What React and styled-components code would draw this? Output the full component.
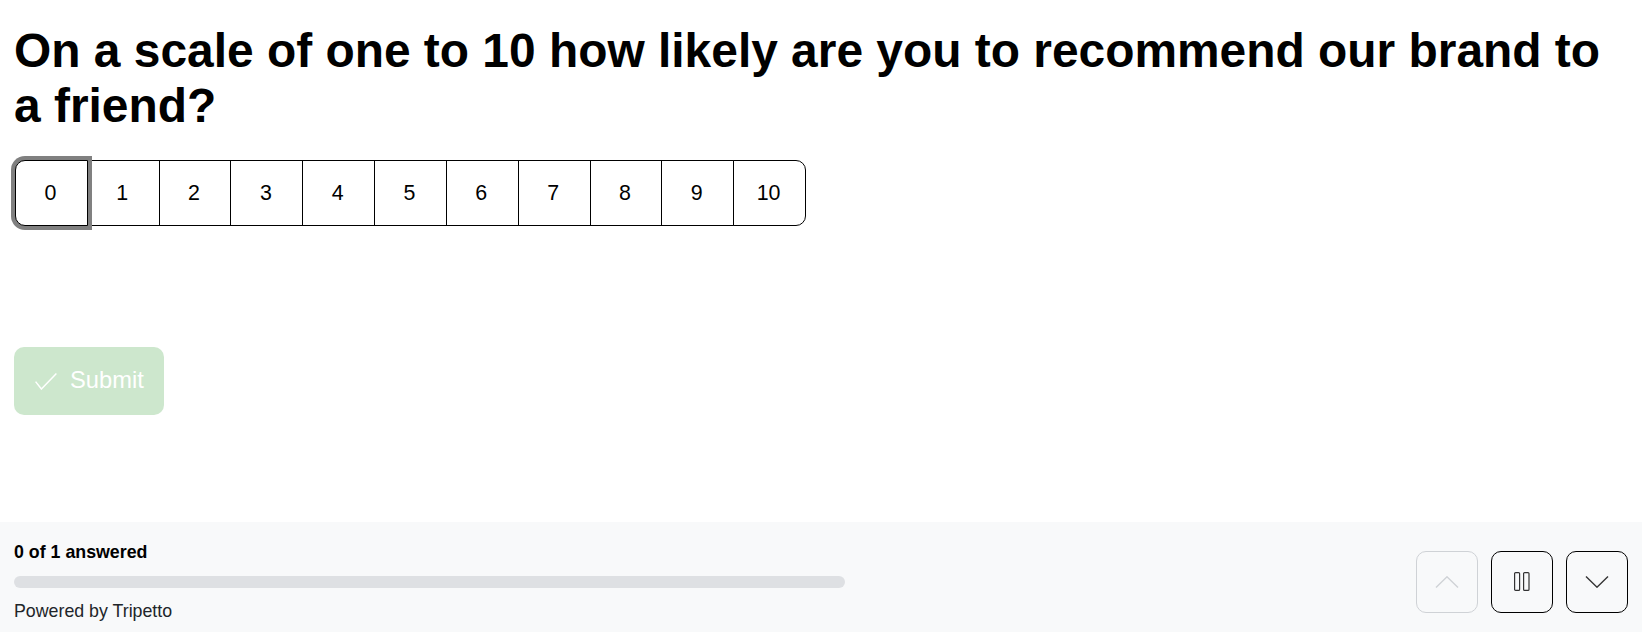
import React from "react";
import styled, { createGlobalStyle } from "styled-components";

const Global = createGlobalStyle`
  html, body { margin: 0; padding: 0; background: #fff; }
  body {
    font-family: "Liberation Sans", Arial, sans-serif;
    font-size: 17.8px;
    color: #000;
  }
  * { box-sizing: border-box; }
`;

const Page = styled.div`
  display: flex;
  flex-direction: column;
  min-height: 632px;
`;

const Main = styled.main`
  flex: 1;
  padding: 23px 14px 0 14px;
`;

const Question = styled.h1`
  margin: 0;
  font-size: 47.9px;
  line-height: 55px;
  font-weight: 700;
  letter-spacing: 0;
`;

const Scale = styled.div`
  display: flex;
  width: 791px;
  height: 66px;
  margin: 27px 0 0 1px;
`;

const ScaleButton = styled.button`
  flex: 1 1 0;
  position: relative;
  height: 100%;
  margin: 0 0 0 -1px;
  padding: 0 2px 0 0;
  border: 1px solid #000;
  background: #fff;
  color: #000;
  font-family: "Liberation Sans", Arial, sans-serif;
  font-size: 21.4px;
  cursor: pointer;
  border-radius: ${(p) =>
    p.$first ? "10px 0 0 10px" : p.$last ? "0 10px 10px 0" : "0"};
  ${(p) =>
    p.$focused &&
    `
    z-index: 1;
    box-shadow: 0 0 0 4px #808080;
  `}
  &:first-child { margin-left: 0; }
`;

const SubmitButton = styled.button`
  display: flex;
  align-items: center;
  gap: 13px;
  margin-top: 121px;
  width: 150px;
  height: 68px;
  padding: 0 20px 0 21px;
  border: none;
  border-radius: 10px;
  background: #cde7cd;
  color: #fff;
  font-family: "Liberation Sans", Arial, sans-serif;
  font-size: 23.7px;
  line-height: 1;
  cursor: default;
`;

const Footer = styled.footer`
  display: flex;
  align-items: center;
  justify-content: space-between;
  background: #f8f9fa;
  padding: 20px 14px 11px 14px;
`;

const Progress = styled.div`
  display: flex;
  flex-direction: column;
  width: 831px;
`;

const Answered = styled.div`
  font-weight: 700;
  font-size: 17.8px;
  line-height: 20px;
`;

const Bar = styled.div`
  margin-top: 14px;
  height: 12px;
  border-radius: 6px;
  background: #dee0e3;
`;

const Powered = styled.div`
  margin-top: 13px;
  font-size: 17.8px;
  line-height: 20px;
  color: #212529;
`;

const NavGroup = styled.div`
  display: flex;
  gap: 13px;
`;

const NavButton = styled.button`
  display: flex;
  align-items: center;
  justify-content: center;
  width: 62px;
  height: 62px;
  padding: 0;
  border-radius: 10px;
  background: transparent;
  border: 1px solid ${(p) => (p.$disabled ? "#cfd2d6" : "#000")};
  color: ${(p) => (p.$disabled ? "#cfd2d6" : "#333")};
  cursor: ${(p) => (p.$disabled ? "default" : "pointer")};
`;

const Chevron = ({ up }) => (
  <svg width="24" height="12" viewBox="0 0 24 12" fill="none">
    <path
      d={up ? "M1 11.5 L12 0.8 L23 11.5" : "M1 0.5 L12 11.2 L23 0.5"}
      stroke="currentColor"
      strokeWidth="1.4"
    />
  </svg>
);

const PauseIcon = () => (
  <svg width="16" height="19" viewBox="0 0 16 19" fill="none">
    <rect x="0.6" y="0.6" width="5" height="17.8" rx="1" stroke="currentColor" strokeWidth="1.2" />
    <rect x="9.6" y="0.6" width="5.4" height="17.8" rx="1" stroke="currentColor" strokeWidth="1.2" />
  </svg>
);

const CheckIcon = () => (
  <svg width="22" height="17" viewBox="0 0 22 17" fill="none">
    <path d="M0.6 8.6 L6.4 16 L21.4 0.6" stroke="currentColor" strokeWidth="1.5" />
  </svg>
);

export default function App() {
  const values = Array.from({ length: 11 }, (_, i) => i);
  return (
    <Page>
      <Global />
      <Main>
        <Question>
          On a scale of one to 10 how likely are you to recommend our brand to a friend?
        </Question>
        <Scale>
          {values.map((v) => (
            <ScaleButton
              key={v}
              $first={v === 0}
              $last={v === 10}
              $focused={v === 0}
            >
              {v}
            </ScaleButton>
          ))}
        </Scale>
        <SubmitButton>
          <CheckIcon />
          <span>Submit</span>
        </SubmitButton>
      </Main>
      <Footer>
        <Progress>
          <Answered>0 of 1 answered</Answered>
          <Bar />
          <Powered>Powered by Tripetto</Powered>
        </Progress>
        <NavGroup>
          <NavButton $disabled>
            <Chevron up />
          </NavButton>
          <NavButton>
            <PauseIcon />
          </NavButton>
          <NavButton>
            <Chevron />
          </NavButton>
        </NavGroup>
      </Footer>
    </Page>
  );
}
